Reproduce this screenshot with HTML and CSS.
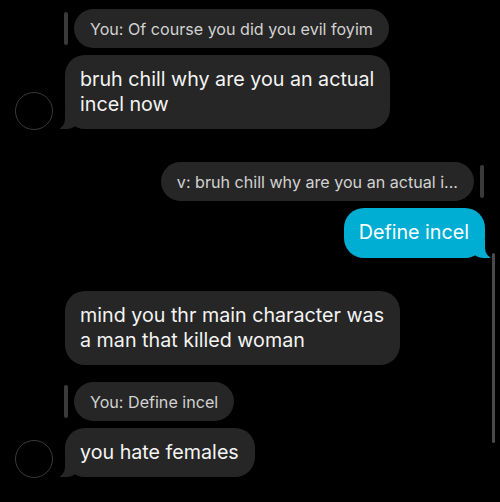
FILE: index.html
```html
<!DOCTYPE html>
<html>
<head>
<meta charset="utf-8">
<link rel="stylesheet" href="styles.css">
</head>
<body>
<div class="chat">
  <div class="group left first">
    <div class="reply-row">
      <span class="reply-bar"></span>
      <div class="quote">You: Of course you did you evil foyim</div>
    </div>
    <div class="row">
      <span class="avatar"></span>
      <div class="bubble tail">bruh chill why are you an actual<br>incel now</div>
    </div>
  </div>

  <div class="group right">
    <div class="reply-row">
      <div class="quote">v: bruh chill why are you an actual i...</div>
      <span class="reply-bar"></span>
    </div>
    <div class="row">
      <div class="bubble mine tail">Define incel</div>
    </div>
  </div>

  <div class="thread">
    <div class="group left">
      <div class="row">
        <span class="avatar empty"></span>
        <div class="bubble">mind you thr main character was<br>a man that killed woman</div>
      </div>
    </div>

    <div class="group left reply-group">
      <div class="reply-row">
        <span class="reply-bar"></span>
        <div class="quote">You: Define incel</div>
      </div>
      <div class="row">
        <span class="avatar"></span>
        <div class="bubble tail">you hate females</div>
      </div>
    </div>
  </div>
</div>
</body>
</html>
```

FILE: styles.css
```css
* { box-sizing: border-box; }

html, body {
  margin: 0;
  padding: 0;
  background: #000;
}

body {
  width: 500px;
  height: 502px;
  overflow: hidden;
  font-family: "Inter", "Liberation Sans", sans-serif;
  color: #f4f4f4;
}

.chat {
  display: flex;
  flex-direction: column;
  padding-top: 9px;
}

.group {
  display: flex;
  flex-direction: column;
  gap: 7px;
}

.group.right {
  align-items: flex-end;
  margin-top: 33px;
  padding-right: 15px;
}

.thread {
  position: relative;
  display: flex;
  flex-direction: column;
  margin-top: 33px;
}

.thread::after {
  content: "";
  position: absolute;
  right: 5px;
  top: -38px;
  height: 190px;
  width: 3px;
  border-radius: 2px;
  background: #4a4a4a;
}

.reply-group {
  margin-top: 17px;
}

.reply-row {
  display: flex;
  align-items: center;
  gap: 6px;
}

.left .reply-row {
  margin-left: 64px;
}

.right .reply-row {
  margin-right: 1px;
}

.reply-bar {
  width: 4px;
  height: 33px;
  border-radius: 2px;
  background: #3a3a3a;
}

.quote {
  height: 39px;
  display: flex;
  align-items: center;
  padding: 0 16px;
  border-radius: 20px;
  background: #262626;
  color: #d2d2d2;
  font-size: 16.1px;
  white-space: nowrap;
}

.row {
  display: flex;
  align-items: flex-end;
}

.avatar {
  width: 38px;
  height: 38px;
  flex: none;
  border-radius: 50%;
  border: 1px solid #3a3a3a;
  margin-left: 15px;
  margin-right: 12px;
  margin-bottom: -1px;
}

.avatar.empty {
  border-color: transparent;
}

.bubble {
  position: relative;
  background: #262626;
  color: #f4f4f4;
  font-size: 19.7px;
  line-height: 25px;
  padding: 12px 16px 12px 15px;
  border-radius: 20px;
}

.bubble.mine {
  background: #00aed4;
  color: #fff;
  padding: 12px 16px 13px 15px;
}

.bubble.tail::before {
  content: "";
  position: absolute;
  bottom: 0;
  left: -5px;
  width: 20px;
  height: 18px;
  background: #262626;
  border-bottom-right-radius: 14px 12px;
  z-index: 0;
}

.bubble.tail::after {
  content: "";
  position: absolute;
  bottom: 0;
  left: -10px;
  width: 10px;
  height: 18px;
  background: #000;
  border-bottom-right-radius: 8px 10px;
}

.bubble.mine.tail::before {
  left: auto;
  right: -5px;
  background: #00aed4;
  border-bottom-right-radius: 0;
  border-bottom-left-radius: 14px 12px;
}

.bubble.mine.tail::after {
  left: auto;
  right: -10px;
  border-bottom-right-radius: 0;
  border-bottom-left-radius: 8px 10px;
}
```
